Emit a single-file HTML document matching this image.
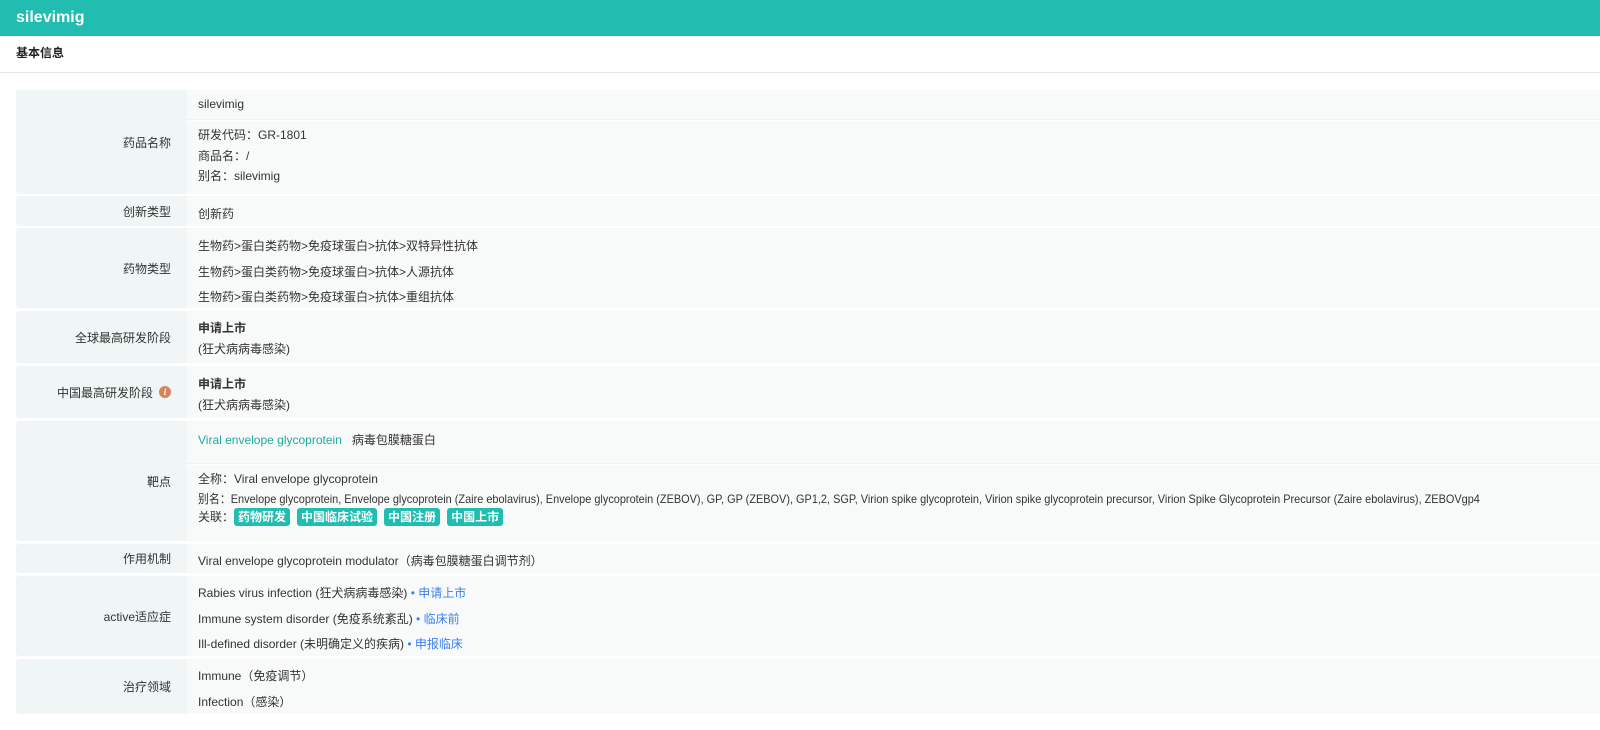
<!DOCTYPE html>
<html><head><meta charset="utf-8"><style>
*{margin:0;padding:0;box-sizing:border-box}
body{width:1600px;height:730px;background:#fff;font-family:"Liberation Sans","Noto Sans CJK SC",sans-serif;font-size:12px;color:#333;position:relative;overflow:hidden}
.top{position:absolute;left:0;top:0;width:1600px;height:36px;background:#20bdb0;color:#fff;font-weight:bold;font-size:16px;line-height:36px;padding-left:16px}
.sec{position:absolute;left:0;top:36px;width:1600px;height:37px;border-bottom:1px solid #e5e5e5;font-weight:bold;font-size:12px;line-height:34px;padding-left:16px;color:#222}
.l{position:absolute;left:16px;width:171px;background:#eff6f5;border-radius:3px 0 0 3px;text-align:right;padding-right:16px;display:flex;align-items:center;justify-content:flex-end}
.v{position:absolute;left:187px;width:1413px;background:#f8fafa;padding-left:11px}
.t{position:absolute;white-space:nowrap}
.b{font-weight:bold}
.g{color:#20a99e}
.bl{color:#3a7ff0}
.tag{display:inline-block;background:#20bdb0;color:#fff;font-weight:bold;border-radius:3px;padding:0 4px;height:18px;line-height:18px;margin-right:7px}
.i{display:inline-block;width:12px;height:12px;border-radius:50%;background:#d9835a;color:#fff;font-size:9px;line-height:12px;text-align:center;font-style:italic;font-weight:bold;margin-left:6px;font-family:"Liberation Serif",serif}
.sq{transform:scaleX(0.91);transform-origin:left center}
</style></head><body>
<div class="top">silevimig</div>
<div class="sec">基本信息</div>

<div class="l" style="top:90px;height:104px">药品名称</div>
<div class="v" style="top:90px;height:30px;border-bottom:1px solid #eef2f2"></div>
<div class="v" style="top:121px;height:73px"></div>
<div class="t" style="left:198px;top:97px">silevimig</div>
<div class="t" style="left:198px;top:126px">研发代码：GR-1801</div>
<div class="t" style="left:198px;top:147px">商品名：/</div>
<div class="t" style="left:198px;top:167px">别名：silevimig</div>

<div class="l" style="top:196px;height:30px">创新类型</div>
<div class="v" style="top:196px;height:30px"></div>
<div class="t" style="left:198px;top:205px">创新药</div>

<div class="l" style="top:228px;height:80px">药物类型</div>
<div class="v" style="top:228px;height:80px"></div>
<div class="t" style="left:198px;top:237px">生物药&gt;蛋白类药物&gt;免疫球蛋白&gt;抗体&gt;双特异性抗体</div>
<div class="t" style="left:198px;top:263px">生物药&gt;蛋白类药物&gt;免疫球蛋白&gt;抗体&gt;人源抗体</div>
<div class="t" style="left:198px;top:288px">生物药&gt;蛋白类药物&gt;免疫球蛋白&gt;抗体&gt;重组抗体</div>

<div class="l" style="top:311px;height:52px">全球最高研发阶段</div>
<div class="v" style="top:311px;height:52px"></div>
<div class="t b" style="left:198px;top:319px">申请上市</div>
<div class="t" style="left:198px;top:340px">(狂犬病病毒感染)</div>

<div class="l" style="top:366px;height:52px">中国最高研发阶段<span class="i">i</span></div>
<div class="v" style="top:366px;height:52px"></div>
<div class="t b" style="left:198px;top:375px">申请上市</div>
<div class="t" style="left:198px;top:396px">(狂犬病病毒感染)</div>

<div class="l" style="top:421px;height:120px">靶点</div>
<div class="v" style="top:421px;height:43px;border-bottom:1px solid #eef2f2"></div>
<div class="v" style="top:465px;height:76px"></div>
<div class="t" style="left:198px;top:431px"><span class="g">Viral envelope glycoprotein</span>&nbsp;&nbsp; 病毒包膜糖蛋白</div>
<div class="t" style="left:198px;top:470px">全称：Viral envelope glycoprotein</div>
<div class="t sq" style="left:198px;top:490px">别名：Envelope glycoprotein, Envelope glycoprotein (Zaire ebolavirus), Envelope glycoprotein (ZEBOV), GP, GP (ZEBOV), GP1,2, SGP, Virion spike glycoprotein, Virion spike glycoprotein precursor, Virion Spike Glycoprotein Precursor (Zaire ebolavirus), ZEBOVgp4</div>
<div class="t" style="left:198px;top:508px">关联：<span class="tag">药物研发</span><span class="tag">中国临床试验</span><span class="tag">中国注册</span><span class="tag">中国上市</span></div>

<div class="l" style="top:544px;height:29px">作用机制</div>
<div class="v" style="top:544px;height:29px"></div>
<div class="t" style="left:198px;top:552px">Viral envelope glycoprotein modulator（病毒包膜糖蛋白调节剂）</div>

<div class="l" style="top:576px;height:80px">active适应症</div>
<div class="v" style="top:576px;height:80px"></div>
<div class="t" style="left:198px;top:584px">Rabies virus infection (狂犬病病毒感染) <span class="bl">• 申请上市</span></div>
<div class="t" style="left:198px;top:610px">Immune system disorder (免疫系统紊乱) <span class="bl">• 临床前</span></div>
<div class="t" style="left:198px;top:635px">Ill-defined disorder (未明确定义的疾病) <span class="bl">• 申报临床</span></div>

<div class="l" style="top:659px;height:55px">治疗领域</div>
<div class="v" style="top:659px;height:55px"></div>
<div class="t" style="left:198px;top:667px">Immune（免疫调节）</div>
<div class="t" style="left:198px;top:693px">Infection（感染）</div>
</body></html>
